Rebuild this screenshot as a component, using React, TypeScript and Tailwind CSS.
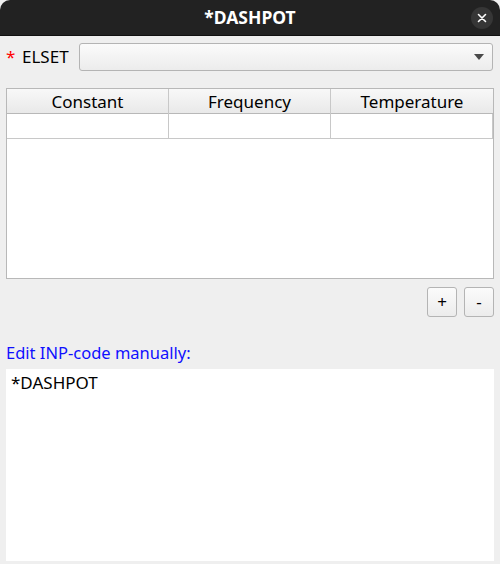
import React from "react";

export default function App() {
  const font = { fontFamily: '"Noto Sans", "DejaVu Sans", sans-serif' };
  return (
    <div className="w-[500px] h-[564px] bg-[#efefef] flex flex-col overflow-hidden" style={font}>
      <div className="h-[36px] bg-[#222222] rounded-t-[10px] flex items-center justify-center relative border-b border-[#111]">
        <span className="text-white font-bold text-[17.5px]">*DASHPOT</span>
        <div className="absolute right-[7px] top-[7px] w-[22px] h-[22px] rounded-full bg-[#363636] flex items-center justify-center">
          <svg width="10" height="10" viewBox="0 0 10 10">
            <path d="M1.5 1.5 L8.5 8.5 M8.5 1.5 L1.5 8.5" stroke="#ffffff" strokeWidth="1.6" strokeLinecap="round" />
          </svg>
        </div>
      </div>

      <div className="flex items-center h-[28px] mt-[7px] pl-[6px] pr-[7px]">
        <span className="text-[#ff0000] text-[17px] w-[16px]">*</span>
        <span className="text-[17px] text-black w-[57px]">ELSET</span>
        <div className="flex-1 h-[28px] rounded-[3px] border border-[#b4b4b4] bg-gradient-to-b from-[#fbfbfb] to-[#ececec] flex items-center justify-end pr-[8px]">
          <svg width="10" height="6" viewBox="0 0 10 6">
            <path d="M0 0 L10 0 L5 6 Z" fill="#4a4a4a" />
          </svg>
        </div>
      </div>

      <div className="mx-[6px] mt-[17px] h-[191px] border border-[#b8b8b8] bg-white flex flex-col w-[488px]">
        <div className="grid grid-cols-3 h-[25px] bg-gradient-to-b from-[#f8f8f8] to-[#e9e9e9] border-b border-[#b8b8b8]">
          <div className="flex items-center justify-center text-[17px] text-black border-r border-[#c8c8c8]">Constant</div>
          <div className="flex items-center justify-center text-[17px] text-black border-r border-[#c8c8c8]">Frequency</div>
          <div className="flex items-center justify-center text-[17px] text-black">Temperature</div>
        </div>
        <div className="grid grid-cols-3 h-[25px] border-b border-[#c8c8c8]">
          <div className="border-r border-[#c8c8c8]"></div>
          <div className="border-r border-[#c8c8c8]"></div>
          <div className="border-r border-[#c8c8c8]"></div>
        </div>
      </div>

      <div className="flex justify-end gap-[7px] pr-[6px] mt-[8px]">
        <button className="w-[30px] h-[30px] rounded-[3px] border border-[#b4b4b4] bg-gradient-to-b from-[#fbfbfb] to-[#ececec] text-[17px] text-black flex items-center justify-center">+</button>
        <button className="w-[30px] h-[30px] rounded-[3px] border border-[#b4b4b4] bg-gradient-to-b from-[#fbfbfb] to-[#ececec] text-[17px] text-black flex items-center justify-center">-</button>
      </div>

      <div className="pl-[6px] mt-[25px] text-[16.5px] text-[#1010ff] leading-[22px]">Edit INP-code manually:</div>

      <div className="mx-[6px] mt-[5px] h-[192px] w-[488px] bg-white px-[5px] pt-[3px] text-[17px] text-black leading-[22px]">*DASHPOT</div>
    </div>
  );
}
